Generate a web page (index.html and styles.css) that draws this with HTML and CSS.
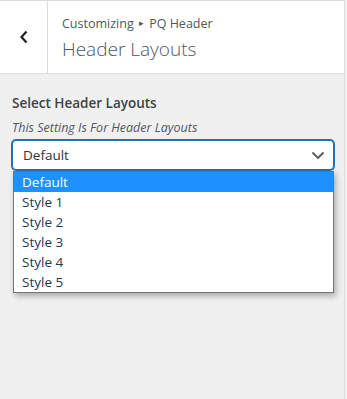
FILE: index.html
```html
<!DOCTYPE html>
<html lang="en">
<head>
    <meta charset="UTF-8">
    <meta name="viewport" content="width=device-width, initial-scale=1.0">
    <title>Header Layouts</title>
    <link rel="stylesheet" href="styles.css">
</head>
<body>
    <div class="panel">
        <div class="panel-header">
            <button class="back-button" aria-label="Back">
                <svg width="10" height="14" viewBox="0 0 10 14"><path d="M7.5 1.5 L2.5 7 L7.5 12.5" fill="none" stroke="#1d2327" stroke-width="2.2"/></svg>
            </button>
            <div class="panel-title">
                <span class="crumbs">Customizing <span class="arrow">&#9656;</span> PQ Header</span>
                <h3>Header Layouts</h3>
            </div>
        </div>
        <div class="control">
            <label class="control-title">Select Header Layouts</label>
            <span class="description">This Setting Is For Header Layouts</span>
            <div class="select-wrap">
                <div class="select-box">
                    <span>Default</span>
                    <svg width="14" height="9" viewBox="0 0 14 9"><path d="M1.5 1.5 L7 7 L12.5 1.5" fill="none" stroke="#50575e" stroke-width="1.8"/></svg>
                </div>
                <ul class="options">
                    <li class="selected">Default</li>
                    <li>Style 1</li>
                    <li>Style 2</li>
                    <li>Style 3</li>
                    <li>Style 4</li>
                    <li>Style 5</li>
                </ul>
            </div>
        </div>
    </div>
</body>
</html>
```

FILE: styles.css
```css
html, body {
    margin: 0;
    padding: 0;
    height: 100%;
}
body {
    font-family: "Open Sans", "Noto Sans", sans-serif;
    background: #f0f0f1;
    color: #1d2327;
}
.panel {
    width: 345px;
    height: 100%;
    border-right: 1px solid #dcdcde;
    box-sizing: border-box;
    background: #f0f0f1;
}
.panel-header {
    display: flex;
    height: 74px;
    background: #fff;
    border-top: 1px solid #dcdcde;
    border-bottom: 1px solid #dcdcde;
    box-sizing: border-box;
}
.back-button {
    width: 48px;
    border: none;
    border-right: 1px solid #dcdcde;
    background: #fff;
    padding: 0;
    display: flex;
    align-items: center;
    justify-content: center;
}
.panel-title {
    padding: 13px 0 0 14px;
    display: flex;
    flex-direction: column;
}
.crumbs {
    font-size: 12.5px;
    color: #50575e;
    line-height: 18px;
}
.arrow {
    font-size: 9px;
    vertical-align: 2px;
    padding: 0 2px;
}
.panel-title h3 {
    margin: 3px 0 0;
    font-size: 19px;
    font-weight: 300;
    color: #50575e;
    line-height: 26px;
}
.control {
    padding: 20px 12px 0 12px;
}
.control-title {
    display: block;
    font-size: 13.5px;
    font-weight: 600;
    color: #3c434a;
    line-height: 18px;
}
.description {
    display: block;
    margin-top: 7px;
    font-size: 12.5px;
    font-style: italic;
    color: #50575e;
    line-height: 18px;
}
.select-wrap {
    position: relative;
    margin-top: 3px;
    width: 322px;
}
.select-box {
    height: 30px;
    box-sizing: border-box;
    border: 1px solid #2271b1;
    box-shadow: 0 0 0 1px #2271b1;
    border-radius: 4px;
    background: #fff;
    display: flex;
    align-items: center;
    justify-content: space-between;
    padding: 0 8px 0 10px;
    font-size: 13.5px;
    color: #2c3338;
}
.options {
    position: absolute;
    top: 31px;
    left: 1px;
    right: 0;
    margin: 0;
    padding: 0;
    list-style: none;
    background: #fff;
    border: 1px solid #767676;
    box-shadow: 2px 3px 6px rgba(0,0,0,0.3);
}
.options li {
    height: 20px;
    line-height: 20px;
    padding-left: 8px;
    font-size: 13.5px;
    color: #1d3a50;
}
.options li.selected {
    background: #1e90ff;
    color: #fff;
}
```
